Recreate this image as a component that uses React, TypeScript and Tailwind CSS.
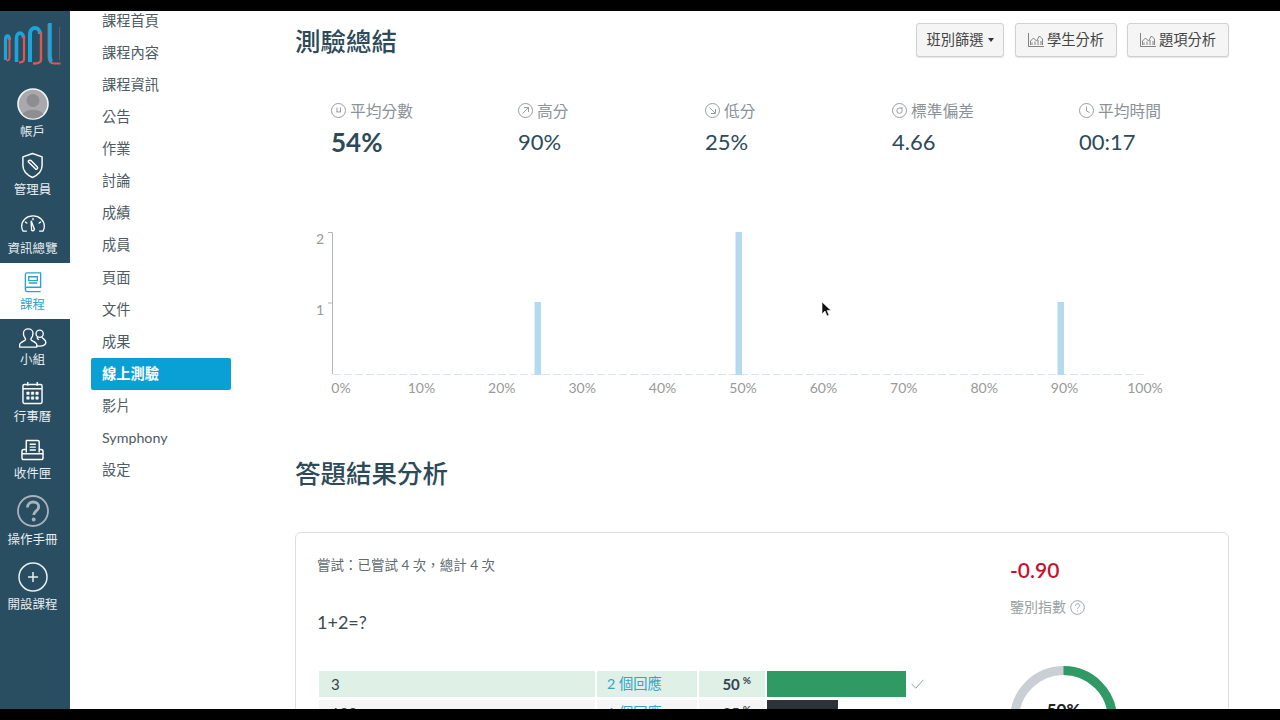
import React from 'react';

const navLinks = ['課程首頁', '課程內容', '課程資訊', '公告', '作業', '討論', '成績', '成員', '頁面', '文件', '成果', '線上測驗', '影片', 'Symphony', '設定'];

const LogoMark = () => (
  <svg viewBox="0 0 60 46" className="w-[60px] h-[46px] ml-[3px]" fill="none">
    <path d="M2.500 39V19c0-5.500 4-5.500 4 0" stroke="#1fa3d8" strokeWidth="3.200" />
    <path d="M6.500 17v19c0 3-1 3.500-3 3.500" stroke="#e2574c" strokeWidth="2" />
    <path d="M13.500 41V17c0-6.500 7-6.500 7 0" stroke="#1fa3d8" strokeWidth="3.600" />
    <path d="M21 15v23c0 3-2 3.500-5 3.500" stroke="#e2574c" strokeWidth="2.200" />
    <path d="M27 41V13c0-8 10-8 10 0" stroke="#1fa3d8" strokeWidth="4" />
    <path d="M38 11v28c0 3-3 3.500-8 3.500" stroke="#e2574c" strokeWidth="2.400" />
    <path d="M45.500 3v33c0 5 3 6.500 6 6.500h6" stroke="#e2574c" strokeWidth="1.800" />
    <path d="M47 2v33c0 3 .5 4.500 2 5.500" stroke="#1fa3d8" strokeWidth="3.600" />
    <path d="M56.500 6v33" stroke="#6a5a6a" strokeWidth="1" />
  </svg>
);

const Avatar = () => (
  <svg viewBox="0 0 32 32" className="w-[32px] h-[32px]">
    <defs>
      <clipPath id="av">
        <circle cx="16" cy="16" r="14.5" />
      </clipPath>
    </defs>
    <circle cx="16" cy="16" r="15" fill="#a9a9ad" stroke="#f1f5f6" strokeWidth="1.6" />
    <g clipPath="url(#av)">
      <circle cx="16" cy="12.5" r="6.5" fill="#8d8d92" />
      <path d="M4 30c1-7 7-8 12-8s11 1 12 8v3H4z" fill="#8d8d92" />
    </g>
  </svg>
);

const ShieldIcon = () => (
  <svg viewBox="0 0 24 28" className="w-[23px] h-[27px]" fill="none" stroke="#fff" strokeWidth="1.5" strokeLinejoin="round">
    <path d="M12 1.500l10 3.500v9c0 6-4.500 10-10 12.500C6.500 24 2 20 2 14V5z" />
    <path d="M7.500 9.500c1-1.200 2.600-1.200 3.500-.2l6 6.200c1.200 1.400-.6 3.200-2 2l-6.200-6c-.6-.6-1.300-1.200-1.300-2z" />
  </svg>
);

const GaugeIcon = () => (
  <svg viewBox="0 0 26 18" className="w-[26px] h-[17px]" fill="none" stroke="#fff" strokeWidth="1.4" strokeLinecap="round">
    <path d="M6 17H2.500C1.500 15.500 1 13.500 1 12 1 6 6 1 13 1s12 5 12 11c0 1.500-.5 3.500-1.500 5H20" />
    <path d="M11 6l3.500 9a1.800 1.800 0 0 1-3 1.200z" />
    <path d="M5 7.500l1.500 1M13 3.500v1.500M21 7.500l-1.500 1" />
  </svg>
);

const BookIcon = () => (
  <svg viewBox="0 0 18 22" className="w-[18px] h-[21px]" fill="none" stroke="#2ba3cc" strokeWidth="1.4">
    <path d="M1 18V2.500C1 1.500 1.700 1 2.500 1H17v15H3c-1.200 0-2 .8-2 2s.8 2.500 2 2.500h14" />
    <path d="M4.500 5h9v4h-9zM4.500 11.500h9" />
  </svg>
);

const GroupIcon = () => (
  <svg viewBox="0 0 30 21" className="w-[29px] h-[20px]" fill="none" stroke="#fff" strokeWidth="1.4" strokeLinejoin="round">
    <path d="M1.500 20v-2.500c0-2 4-3.500 5.500-4.500 1-.8.8-1.800 0-2.800C5.800 8.800 5.500 7 5.500 5.500 5.500 3 7.500 1 10.500 1s5 2 5 4.500c0 1.500-.3 3.300-1.500 4.700-.8 1-1 2 0 2.800 1.500 1 5.500 2.500 5.500 4.500V20z" />
    <circle cx="22.500" cy="6" r="3.800" />
    <path d="M20 9.500c-.3 2 1 2.200 1.500 3M25 9.500c.3 1.800 4 2.500 4 5.500 0 3-3 4-6.500 4-1 0-2-.2-3-.6" />
  </svg>
);

const CalendarIcon = () => (
  <svg viewBox="0 0 22 24" className="w-[21px] h-[24px]" fill="none" stroke="#fff" strokeWidth="1.5">
    <rect x="1" y="3" width="20" height="20" rx="1.500" />
    <path d="M1 7.500h20M6 .5v4M16 .5v4" />
    <path d="M5 11h2.500v2.500H5zM9.800 11h2.500v2.500H9.800zM14.500 11H17v2.500h-2.500zM5 16h2.500v2.500H5zM9.800 16h2.500v2.500H9.800zM14.500 16H17v2.500h-2.500z" fill="#fff" strokeWidth="0.6" />
  </svg>
);

const InboxIcon = () => (
  <svg viewBox="0 0 24 23" className="w-[23px] h-[22px]" fill="none" stroke="#fff" strokeWidth="1.5" strokeLinejoin="round">
    <path d="M5.500 14V1.500h12c.8 0 1.500.7 1.500 1.500v11" />
    <path d="M9 5.500h6.500M9 8.500h6.500M9 11.500h6.500" />
    <path d="M5 11H3c-1.200 0-2 .8-2 2v6.500c0 1 .8 2 2 2h18c1.200 0 2-1 2-2V13c0-1.200-.8-2-2-2h-2M1 15.500h22" />
  </svg>
);

const HelpIcon = () => (
  <svg viewBox="0 0 32 32" className="w-[32px] h-[32px]" fill="none">
    <circle cx="16" cy="16" r="15" stroke="#a9b3b9" strokeWidth="1.800" />
    <path d="M10.500 12.500c0-3.500 2.500-5.500 5.700-5.500 3.200 0 5.500 1.900 5.500 4.700 0 4-5 4.300-5 8.300" stroke="#a9b3b9" strokeWidth="2.800" />
    <circle cx="16.700" cy="24.500" r="1.900" fill="#a9b3b9" />
  </svg>
);

const PlusIcon = () => (
  <svg viewBox="0 0 30 30" className="w-[30px] h-[30px]" fill="none" stroke="#e8eef1" strokeWidth="1.500">
    <circle cx="15" cy="15" r="14" />
    <path d="M10 15h10M15 10v10" />
  </svg>
);

const railItems = [
  { label: '帳戶', icon: <Avatar />, box: 'mt-[8px] gap-[4px]' },
  { label: '管理員', icon: <ShieldIcon />, box: 'mt-[12px] gap-[3px]' },
  { label: '資訊總覽', icon: <GaugeIcon />, box: 'mt-[17px] gap-[9px]' },
  { label: '課程', icon: <BookIcon />, box: 'mt-[6px] gap-[4px] bg-white pt-[9px] pb-[6px] text-[#2ba3cc]' },
  { label: '小組', icon: <GroupIcon />, box: 'mt-[9px] gap-[4px]' },
  { label: '行事曆', icon: <CalendarIcon />, box: 'mt-[13px] gap-[4px]' },
  { label: '收件匣', icon: <InboxIcon />, box: 'mt-[14px] gap-[5px]' },
  { label: '操作手冊', icon: <HelpIcon />, box: 'mt-[13px] gap-[5px]' },
  { label: '開設課程', icon: <PlusIcon />, box: 'mt-[14px] gap-[5px]' },
];

const Rail = () => (
  <aside className="w-[70px] shrink-0 bg-[#294e62] text-[#e6edf0]">
    <div className="h-[69px] pt-[10px]">
      <LogoMark />
    </div>
    {railItems.map((item) => (
      <div key={item.label} className={`flex flex-col items-center pr-[5px] ${item.box}`}>
        {item.icon}
        <span className="h-[16px] text-[12.5px] leading-[16px] whitespace-nowrap">{item.label}</span>
      </div>
    ))}
  </aside>
);

const CourseNav = () => (
  <nav className="w-[225px] shrink-0 pl-[21px] -mt-[6px]">
    {navLinks.map((link) => (
      <div
        key={link}
        className={
          link === '線上測驗'
            ? 'w-[140px] h-[32.07px] px-[11px] leading-[32px] text-[14.25px] font-bold rounded-[2px] bg-[#0a9fd5] text-white'
            : 'w-[140px] h-[32.07px] px-[11px] leading-[32px] text-[14.25px] text-[#4d5b63]'
        }
      >
        {link}
      </div>
    ))}
  </nav>
);

const ChartGlyph = () => (
  <svg viewBox="0 0 16 14" className="w-[16px] h-[14px]" fill="none" stroke="#777" strokeWidth="0.9">
    <path d="M.5 0v13.500H16" />
    <path d="M2.500 12V8l3-3 3 3 3-5 3 3v6" />
    <path d="M4 12V9.500M7 12V8.500M10 12V7M13 12V8" />
  </svg>
);

const stats = [
  {
    label: '平均分數',
    value: '54%',
    strong: true,
    glyph: <path d="M6 4.500v5M6 8c0 1.500 3.500 1.500 3.500-.5M9.500 4.500V9.500" />,
  },
  { label: '高分', value: '90%', glyph: <path d="M4.500 10.500L10.500 4.500M6 4.500h4.500V9" /> },
  { label: '低分', value: '25%', glyph: <path d="M4.500 4.500l6 6M6 10.500h4.500V6" /> },
  {
    label: '標準偏差',
    value: '4.66',
    glyph: <path d="M11 5H7.500a2.700 2.700 0 1 0 2.700 2.700c0-1-.5-2-1.500-2.700" />,
  },
  { label: '平均時間', value: '00:17', glyph: <path d="M7.500 3.500v4.500l3 1.500" /> },
];

const Stats = () => (
  <div className="mt-[45px] pl-[36px] grid grid-cols-[187px_187px_187px_187px_150px]">
    {stats.map((s) => (
      <div key={s.label}>
        <div className="flex items-center gap-[4px] h-[18px] text-[15.750px] leading-[18px] text-[#8c9296]">
          <svg viewBox="0 0 15 15" className="w-[15px] h-[15px] -mt-[2px]" fill="none" stroke="#8c9296" strokeWidth="0.9">
            <circle cx="7.500" cy="7.500" r="7" />
            {s.glyph}
          </svg>
          {s.label}
        </div>
        <div
          className={
            s.strong
              ? 'mt-[9px] h-[26px] text-[26px] leading-[26px] font-bold text-[#2d4a58]'
              : 'mt-[9px] h-[26px] text-[22px] leading-[26px] text-[#2d4a58]'
          }
        >
          {s.value}
        </div>
      </div>
    ))}
  </div>
);

const xLabels = ['0%', '10%', '20%', '30%', '40%', '50%', '60%', '70%', '80%', '90%', '100%'];

const Histogram = () => (
  <div className="relative mt-[70px] h-[175px]">
    <svg viewBox="0 0 934 175" className="w-[934px] h-[175px]">
      <path d="M33 7.500h4.500V149M33 78h4.500" fill="none" stroke="#b3b3b3" strokeWidth="1" />
      <path d="M38 149.500H850" stroke="#dbe5ea" strokeWidth="1" strokeDasharray="8 3" />
      <rect x="239.500" y="77" width="6.500" height="73" fill="#b5d9ee" />
      <rect x="440.500" y="7" width="6.500" height="143" fill="#b5d9ee" />
      <rect x="762.500" y="77" width="6.500" height="73" fill="#b5d9ee" />
      <text x="25" y="18.500" textAnchor="middle" fontSize="14" fill="#999">2</text>
      <text x="25" y="89.500" textAnchor="middle" fontSize="14" fill="#999">1</text>
      {xLabels.map((t, i) => (
        <text key={t} x={46 + i * 80.4} y="168" textAnchor="middle" fontSize="14" fill="#999">
          {t}
        </text>
      ))}
    </svg>
    <svg viewBox="0 0 10 16" className="absolute left-[526px] top-[76px] w-[10px] h-[16px]">
      <path d="M1 1v12l3-3 2 5 2-1-2-4.500h4z" fill="#111" stroke="#fff" strokeWidth="0.6" />
    </svg>
  </div>
);

const AnswerRow = ({ answer, count, pct, bar, rowBg, barClass, correct }: {
  answer: string;
  count: string;
  pct: string;
  bar: string;
  rowBg: string;
  barClass: string;
  correct?: boolean;
}) => (
  <div className="ml-[2px] flex gap-[2px] h-[26px] text-[14px] leading-[26px]">
    <div className={`w-[276px] px-[12px] text-[15px] text-[#33444d] ${rowBg}`}>{answer}</div>
    <div className={`w-[100px] px-[10px] text-[14.250px] text-[#35a4c7] ${rowBg}`}>{count}</div>
    <div className={`w-[66px] pr-[14px] flex justify-end gap-[3px] font-bold text-[15px] text-[#33444d] ${rowBg}`}>
      {pct}
      <span className="text-[10px] leading-[18px]">%</span>
    </div>
    <div className={`h-[26px] ${bar} ${barClass}`} />
    {correct && (
      <svg viewBox="0 0 16 12" className="ml-[2px] mt-[8px] w-[15px] h-[10px]" fill="none" stroke="#6f8f84" strokeWidth="1">
        <path d="M1 6l5 5 9-10" />
      </svg>
    )}
  </div>
);

const QuestionCard = () => (
  <div className="mt-[42px] h-[400px] rounded-[6px] border border-[#dcdfe1] flex">
    <div className="w-[714px] pl-[21px] pt-[23px]">
      <div className="h-[18px] text-[13.500px] leading-[18px] text-[#5f6b72]">嘗試：已嘗試 4 次，總計 4 次</div>
      <div className="mt-[37px] h-[22px] text-[18px] leading-[22px] text-[#3c4a52]">1+2=?</div>
      <div className="mt-[38px] flex flex-col gap-[3px]">
        <AnswerRow answer="3" count="2 個回應" pct="50" bar="w-[139px]" rowBg="bg-[#dff0e6]" barClass="bg-[#2f9a64]" correct />
        <AnswerRow answer="100" count="1 個回應" pct="25" bar="w-[71px]" rowBg="bg-[#f5f5f5]" barClass="bg-[#2b3238]" />
      </div>
    </div>
    <div className="pt-[23px]">
      <div className="h-[28px] text-[21px] leading-[28px] font-semibold text-[#c8102e]">-0.90</div>
      <div className="mt-[14px] flex items-center gap-[4px] h-[18px] text-[14px] leading-[18px] text-[#9a9fa3]">
        鑒別指數
        <svg viewBox="0 0 16 16" className="w-[15px] h-[15px]" fill="none" stroke="#9a9fa3" strokeWidth="1">
          <circle cx="8" cy="8" r="7.300" />
          <path d="M5.800 6.300c0-1.500 1-2.300 2.300-2.300s2.200.8 2.200 2c0 1.700-2.200 1.800-2.200 3.500M8.100 11v1.200" />
        </svg>
      </div>
      <div className="relative mt-[50px] w-[107px] h-[107px]">
        <svg viewBox="0 0 107 107" className="w-[107px] h-[107px]" fill="none" strokeWidth="9">
          <circle cx="53.500" cy="53.500" r="49" stroke="#c9cfd4" />
          <path d="M53.500 4.500a49 49 0 0 1 0 98" stroke="#2f9a64" />
        </svg>
        <span className="absolute inset-x-0 top-[33px] text-center text-[17px] leading-[22px] font-bold text-[#222]">50%</span>
      </div>
    </div>
  </div>
);

const Toolbar = () => (
  <div className="mt-[12px] h-[34px] flex items-center justify-between">
    <h1 className="mt-[1px] text-[25.500px] leading-[34px] font-medium text-[#2d4a58]">測驗總結</h1>
    <div className="flex gap-[10px] text-[14.250px] text-[#444]">
      <button className="mr-[1px] w-[88px] h-[34px] flex items-center justify-center gap-[4px] rounded-[3px] border border-[#d0d0d0] bg-[#f5f5f5] shadow-[0_1px_1px_rgba(0,0,0,0.1)]">
        班別篩選
        <span className="w-0 h-0 border-x-[3px] border-x-transparent border-t-[4px] border-t-[#333]" />
      </button>
      <button className="w-[102px] h-[34px] flex items-center justify-center gap-[3px] rounded-[3px] border border-[#d0d0d0] bg-[#f5f5f5] shadow-[0_1px_1px_rgba(0,0,0,0.1)]">
        <ChartGlyph />
        學生分析
      </button>
      <button className="w-[102px] h-[34px] flex items-center justify-center gap-[3px] rounded-[3px] border border-[#d0d0d0] bg-[#f5f5f5] shadow-[0_1px_1px_rgba(0,0,0,0.1)]">
        <ChartGlyph />
        題項分析
      </button>
    </div>
  </div>
);

export default function App() {
  return (
    <div className="h-screen flex flex-col bg-black font-['Lato','Noto_Sans_CJK_TC',sans-serif]">
      <div className="h-[11px] shrink-0" />
      <div className="h-[698px] flex overflow-hidden bg-white">
        <Rail />
        <CourseNav />
        <main className="flex-1 min-w-0 pr-[51px]">
          <Toolbar />
          <Stats />
          <Histogram />
          <h2 className="mt-[56px] h-[34px] text-[25.500px] leading-[34px] font-medium text-[#2d4a58]">答題結果分析</h2>
          <QuestionCard />
        </main>
      </div>
    </div>
  );
}
